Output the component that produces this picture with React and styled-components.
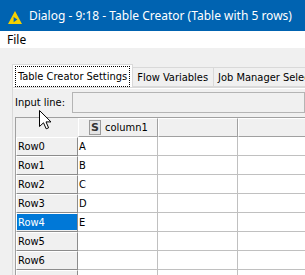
import React from 'react'
import styled, { createGlobalStyle } from 'styled-components'

const GlobalStyle = createGlobalStyle`
    html, body {
        margin: 0;
        padding: 0;
        background: #f0f0f0;
    }
`;

const rows = ['A', 'B', 'C', 'D', 'E', '', '', '']

export default function App() {
    return (
        <>
            <GlobalStyle />
            <Window>
                <TitleBar>
                    <Logo width="14" height="13" viewBox="0 0 14 13">
                        <polygon points="7,0 14,13 0,13" fill="#f5d000" />
                        <polygon points="5.6,6 9.4,8.6 5.6,11.2" fill="#0063b1" />
                    </Logo>
                    <TitleText>Dialog - 9:18 - Table Creator (Table with 5 rows)</TitleText>
                </TitleBar>
                <MenuBar>
                    <MenuItem>File</MenuItem>
                </MenuBar>
                <Body>
                    <Tabs>
                        <Tab active>
                            <Focus>Table Creator Settings</Focus>
                        </Tab>
                        <Tab>Flow Variables</Tab>
                        <Tab>Job Manager Selection</Tab>
                    </Tabs>
                    <Panel>
                        <InputRow>
                            <Label>Input line:</Label>
                            <Field />
                        </InputRow>
                        <Table>
                            <HeadRow>
                                <Corner />
                                <HeadCell>
                                    <TypeBox>S</TypeBox>
                                    column1
                                </HeadCell>
                                <HeadCell />
                                <HeadCell />
                            </HeadRow>
                            {rows.map((v, i) => (
                                <Row key={i}>
                                    <RowHead>
                                        <RowLabel selected={i === 4}>Row{i}</RowLabel>
                                    </RowHead>
                                    <Cell>{v}</Cell>
                                    <Cell />
                                    <Cell />
                                </Row>
                            ))}
                        </Table>
                    </Panel>
                    <Cursor width="13" height="20" viewBox="0 0 13 20">
                        <path d="M0.5 0.5 L0.5 16.5 L4.5 12.8 L7.2 18.8 L9.6 17.8 L7 11.9 L12 11.9 Z" fill="#fff" stroke="#000" strokeWidth="1" />
                    </Cursor>
                </Body>
            </Window>
        </>
    )
}

const Window = styled.div`
    width: 305px;
    height: 275px;
    overflow: hidden;
    display: flex;
    flex-direction: column;
    background: #f0f0f0;
    font-family: Tahoma, "DejaVu Sans Condensed", "Liberation Sans", sans-serif;
`;
const TitleBar = styled.div`
    height: 31px;
    flex-shrink: 0;
    background: #0063b1;
    display: flex;
    align-items: center;
    padding-left: 8px;
    gap: 7px;
`;
const Logo = styled.svg`
    display: block;
    margin-top: 3px;
`;
const TitleText = styled.span`
    color: #fff;
    font-family: "Noto Sans", "Open Sans", sans-serif;
    font-size: 12px;
    white-space: nowrap;
`;
const MenuBar = styled.div`
    height: 17px;
    flex-shrink: 0;
    background: #fff;
    display: flex;
    align-items: center;
    padding-left: 7px;
`;
const MenuItem = styled.span`
    font-family: "Noto Sans", "Open Sans", sans-serif;
    font-size: 12px;
    color: #000;
`;
const Body = styled.div`
    position: relative;
    flex: 1;
    padding: 16px 0 0 12px;
`;
const Tabs = styled.div`
    display: flex;
    align-items: flex-end;
    height: 23px;
`;
const Tab = styled.div`
    height: ${p => (p.active ? '23px' : '20px')};
    box-sizing: border-box;
    display: flex;
    align-items: center;
    padding: ${p => (p.active ? '0 2px' : '0 5px 0 4px')};
    background: ${p => (p.active ? '#fff' : '#f0f0f0')};
    border: 1px solid #d9d9d9;
    border-bottom: ${p => (p.active ? 'none' : '1px solid #d9d9d9')};
    border-left: ${p => (p.active ? '1px solid #d9d9d9' : 'none')};
    font-size: 11px;
    color: #000;
    white-space: nowrap;
`;
const Focus = styled.span`
    border: 1px dotted #000;
    padding: 2px 2px;
    line-height: 15px;
`;
const Panel = styled.div`
    border-top: 1px solid #d9d9d9;
    border-left: 1px solid #d9d9d9;
    box-shadow: inset 0 1px 0 #fff;
    padding: 4px 0 0 2px;
`;
const InputRow = styled.div`
    display: flex;
    align-items: center;
    height: 21px;
    gap: 5px;
`;
const Label = styled.span`
    font-size: 11px;
    color: #000;
    width: 52px;
    white-space: nowrap;
`;
const Field = styled.div`
    flex: 1;
    height: 21px;
    box-sizing: border-box;
    border: 1px solid #b4b4b4;
    background: #f0f0f0;
`;
const Table = styled.div`
    margin-top: 4px;
    border-left: 1px solid #a0a0a0;
    border-top: 1px solid #a0a0a0;
`;
const HeadRow = styled.div`
    display: grid;
    grid-template-columns: 62px 80px 80px 80px;
    height: 19px;
`;
const Corner = styled.div`
    background: #f0f0f0;
`;
const HeadCell = styled.div`
    box-sizing: border-box;
    background: #f0f0f0;
    border-top: 1px solid #fff;
    border-left: 1px solid #fff;
    border-right: 1px solid #a0a0a0;
    border-bottom: 1px solid #a0a0a0;
    display: flex;
    align-items: center;
    padding-left: 10px;
    gap: 4px;
    font-size: 11px;
    color: #000;
`;
const TypeBox = styled.span`
    width: 12px;
    height: 15px;
    box-sizing: border-box;
    border: 1px solid #9a9a9a;
    background: #e4e4e4;
    display: flex;
    align-items: center;
    justify-content: center;
    font-family: "DejaVu Sans", sans-serif;
    font-weight: bold;
    font-size: 11px;
    color: #333;
`;
const Row = styled.div`
    display: grid;
    grid-template-columns: 62px 80px 80px 80px;
    height: 19px;
`;
const RowHead = styled.div`
    box-sizing: border-box;
    background: #f0f0f0;
    border-top: 1px solid #fff;
    border-left: 1px solid #fff;
    border-right: 1px solid #8c8c8c;
    border-bottom: 1px solid #8c8c8c;
    display: flex;
    padding: 0 0 1px 0;
`;
const RowLabel = styled.div`
    flex: 1;
    display: flex;
    align-items: center;
    padding-left: 1px;
    background: ${p => (p.selected ? '#0078d7' : 'transparent')};
    color: ${p => (p.selected ? '#fff' : '#000')};
    font-size: 11px;
`;
const Cell = styled.div`
    box-sizing: border-box;
    background: #fff;
    border-right: 1px solid #c0c0c0;
    border-bottom: 1px solid #c0c0c0;
    display: flex;
    align-items: center;
    padding-left: 1px;
    font-size: 11px;
    color: #000;
`;
const Cursor = styled.svg`
    position: absolute;
    left: 39px;
    top: 62px;
`;
